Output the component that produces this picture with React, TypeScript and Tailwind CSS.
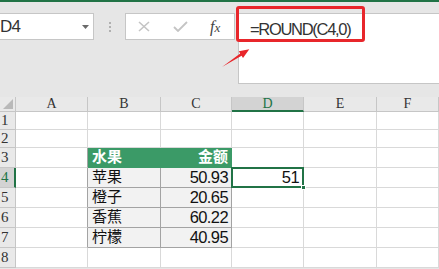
import React from "react";

const cols = ["A", "B", "C", "D", "E", "F"];
const GRID = "border-[#d9d9d9]";
const TB = "border-[#a3a3a3]";
const serif = { fontFamily: '"Liberation Serif", "DejaVu Serif", serif' };

function ColHeader({ l }: { l: string }) {
  const sel = l === "D";
  return (
    <div
      className={
        "flex items-center justify-center border-r border-b text-[14px] leading-none " +
        (sel
          ? "bg-[#d3d3d3] text-[#217346] border-r-[#c6c6c6] border-b-2 border-b-[#217346]"
          : "bg-[#e9e9e9] text-[#333] border-[#c6c6c6]")
      }
      style={serif}
    >
      {l}
    </div>
  );
}

function RowHeader({ n }: { n: number }) {
  const sel = n === 4;
  return (
    <div
      className={
        "flex items-center overflow-hidden border-b text-[15px] leading-none pl-[1px] " +
        (sel
          ? "bg-[#d3d3d3] text-[#217346] border-b-[#c6c6c6] border-r-2 border-r-[#217346]"
          : "bg-[#e9e9e9] text-[#333] border-r border-[#c6c6c6]")
      }
      style={serif}
    >
      <span>{n}</span>
    </div>
  );
}

const cellFont = { fontFamily: '"Liberation Sans", "Noto Sans CJK SC", sans-serif' };

export default function App() {
  const data: [string, string][] = [
    ["苹果", "50.93"],
    ["橙子", "20.65"],
    ["香蕉", "60.22"],
    ["柠檬", "40.95"],
  ];
  const rows = [1, 2, 3, 4, 5, 6, 7, 8];

  return (
    <div className="relative w-[439px] h-[269px] overflow-hidden bg-[#e6e6e6]" style={cellFont}>
      <div className="h-[2px] bg-[#217346]" />
      {/* formula bar row */}
      <div className="flex items-start mt-[11px] h-[71px]">
        <div className="w-[94px] h-[27px] bg-white border border-l-0 border-[#c6c6c6] flex items-center justify-between pr-[4px]">
          <span className="text-[17px] text-[#333] tracking-[-0.9px]">D4</span>
          <svg width="7" height="4" viewBox="0 0 7 4">
            <polygon points="0,0 7,0 3.5,4" fill="#6a6a6a" />
          </svg>
        </div>
        <div className="w-[31px] h-[27px] flex flex-col items-center justify-center gap-[2px]">
          <div className="w-[2px] h-[2px] bg-[#b0b0b0]" />
          <div className="w-[2px] h-[2px] bg-[#b0b0b0]" />
          <div className="w-[2px] h-[2px] bg-[#b0b0b0]" />
        </div>
        <div className="w-[110px] h-[27px] bg-white border border-[#c6c6c6] flex items-center pl-[12px]">
          <svg width="12" height="11" viewBox="0 0 12 11">
            <path d="M1 1 L11 10 M11 1 L1 10" stroke="#c4c4c4" strokeWidth="1.6" fill="none" />
          </svg>
          <svg width="15" height="11" viewBox="0 0 15 11" className="ml-[23px]">
            <path d="M1 6 L5 10 L14 1" stroke="#c4c4c4" strokeWidth="1.8" fill="none" />
          </svg>
          <span className="ml-[22px] italic text-[#444] text-[16px] leading-none" style={serif}>
            f<span className="text-[13px]">x</span>
          </span>
        </div>
        <div className="flex-1 ml-[3px] h-[71px] bg-white border border-r-0 border-[#c6c6c6] pl-[11px] pt-[3px]">
          <span className="text-[16.5px] text-[#333] tracking-[-1.3px]">=ROUND(C4,0)</span>
        </div>
      </div>

      {/* grid */}
      <div className="mt-[13px] grid grid-cols-[16px_72px_73px_71px_72px_73px_62px] grid-rows-[15px_18px_18px_20px_20px_20px_20px_20px_20px]">
        <div className="bg-[#e9e9e9] border-r border-b border-[#c6c6c6] flex items-end justify-end p-[2px]">
          <svg width="10" height="10" viewBox="0 0 10 10">
            <polygon points="10,0 10,10 0,10" fill="#b9b9b9" />
          </svg>
        </div>
        {cols.map((c) => (
          <ColHeader key={c} l={c} />
        ))}

        {rows.map((r) => {
          const inTable = r >= 3 && r <= 7;
          const isHead = r === 3;
          const d = r >= 4 && r <= 7 ? data[r - 4] : null;
          return (
            <React.Fragment key={r}>
              <RowHeader n={r} />
              {/* A */}
              <div className={"bg-white border-r border-b " + GRID + (inTable ? " border-r-[#a3a3a3]" : "")} />
              {/* B */}
              {isHead ? (
                <div className="bg-[#3b9a67] border-r border-b border-[#3b9a67] flex items-end pl-[4px] pb-[1px] text-white font-bold text-[15px] leading-[18px]">
                  水果
                </div>
              ) : d ? (
                <div className={"bg-[#f2f2f2] border-r border-b " + TB + " flex items-end pl-[4px] pb-[1px] text-[15px] leading-[18px] text-[#111]"}>
                  {d[0]}
                </div>
              ) : (
                <div className={"bg-white border-r border-b " + GRID} />
              )}
              {/* C */}
              {isHead ? (
                <div className="bg-[#3b9a67] border-r border-b border-[#3b9a67] flex items-end justify-end pr-[3px] pb-[1px] text-white font-bold text-[15px] leading-[18px]">
                  金额
                </div>
              ) : d ? (
                <div className={"bg-[#f2f2f2] border-r border-b " + TB + " flex items-end justify-end pr-[3px] pb-[1px] text-[16.5px] leading-[18px] tracking-[-0.6px] text-[#111]"}>
                  {d[1]}
                </div>
              ) : (
                <div className={"bg-white border-r border-b " + GRID} />
              )}
              {/* D */}
              {r === 4 ? (
                <div className={"relative bg-white border-r border-b " + GRID + " flex items-end justify-end pr-[4px] pb-[1px] text-[16.5px] leading-[18px] tracking-[-0.6px] text-[#111]"}>
                  51
                  <div className="absolute -left-[1px] -top-[1px] -right-[1px] -bottom-[1px] border-2 border-[#217346]" />
                  <div className="absolute -right-[3px] -bottom-[3px] w-[5px] h-[5px] bg-[#217346] border border-white" />
                </div>
              ) : (
                <div className={"bg-white border-r border-b " + GRID} />
              )}
              <div className={"bg-white border-r border-b " + GRID} />
              <div className={"bg-white border-r border-b " + GRID} />
            </React.Fragment>
          );
        })}
      </div>

      {/* red highlight box */}
      <div className="absolute left-[236px] top-[6px] w-[129px] h-[36px] border-[3px] border-[#e8262b] rounded-[3px]" />
      {/* red arrow */}
      <svg className="absolute left-0 top-0 pointer-events-none" width="439" height="269">
        <polygon
          points="222,67 240.2,53.6 238.8,51.3 249.3,49.3 243,58.1 241.6,55.8"
          fill="#e8262b"
        />
      </svg>
    </div>
  );
}
